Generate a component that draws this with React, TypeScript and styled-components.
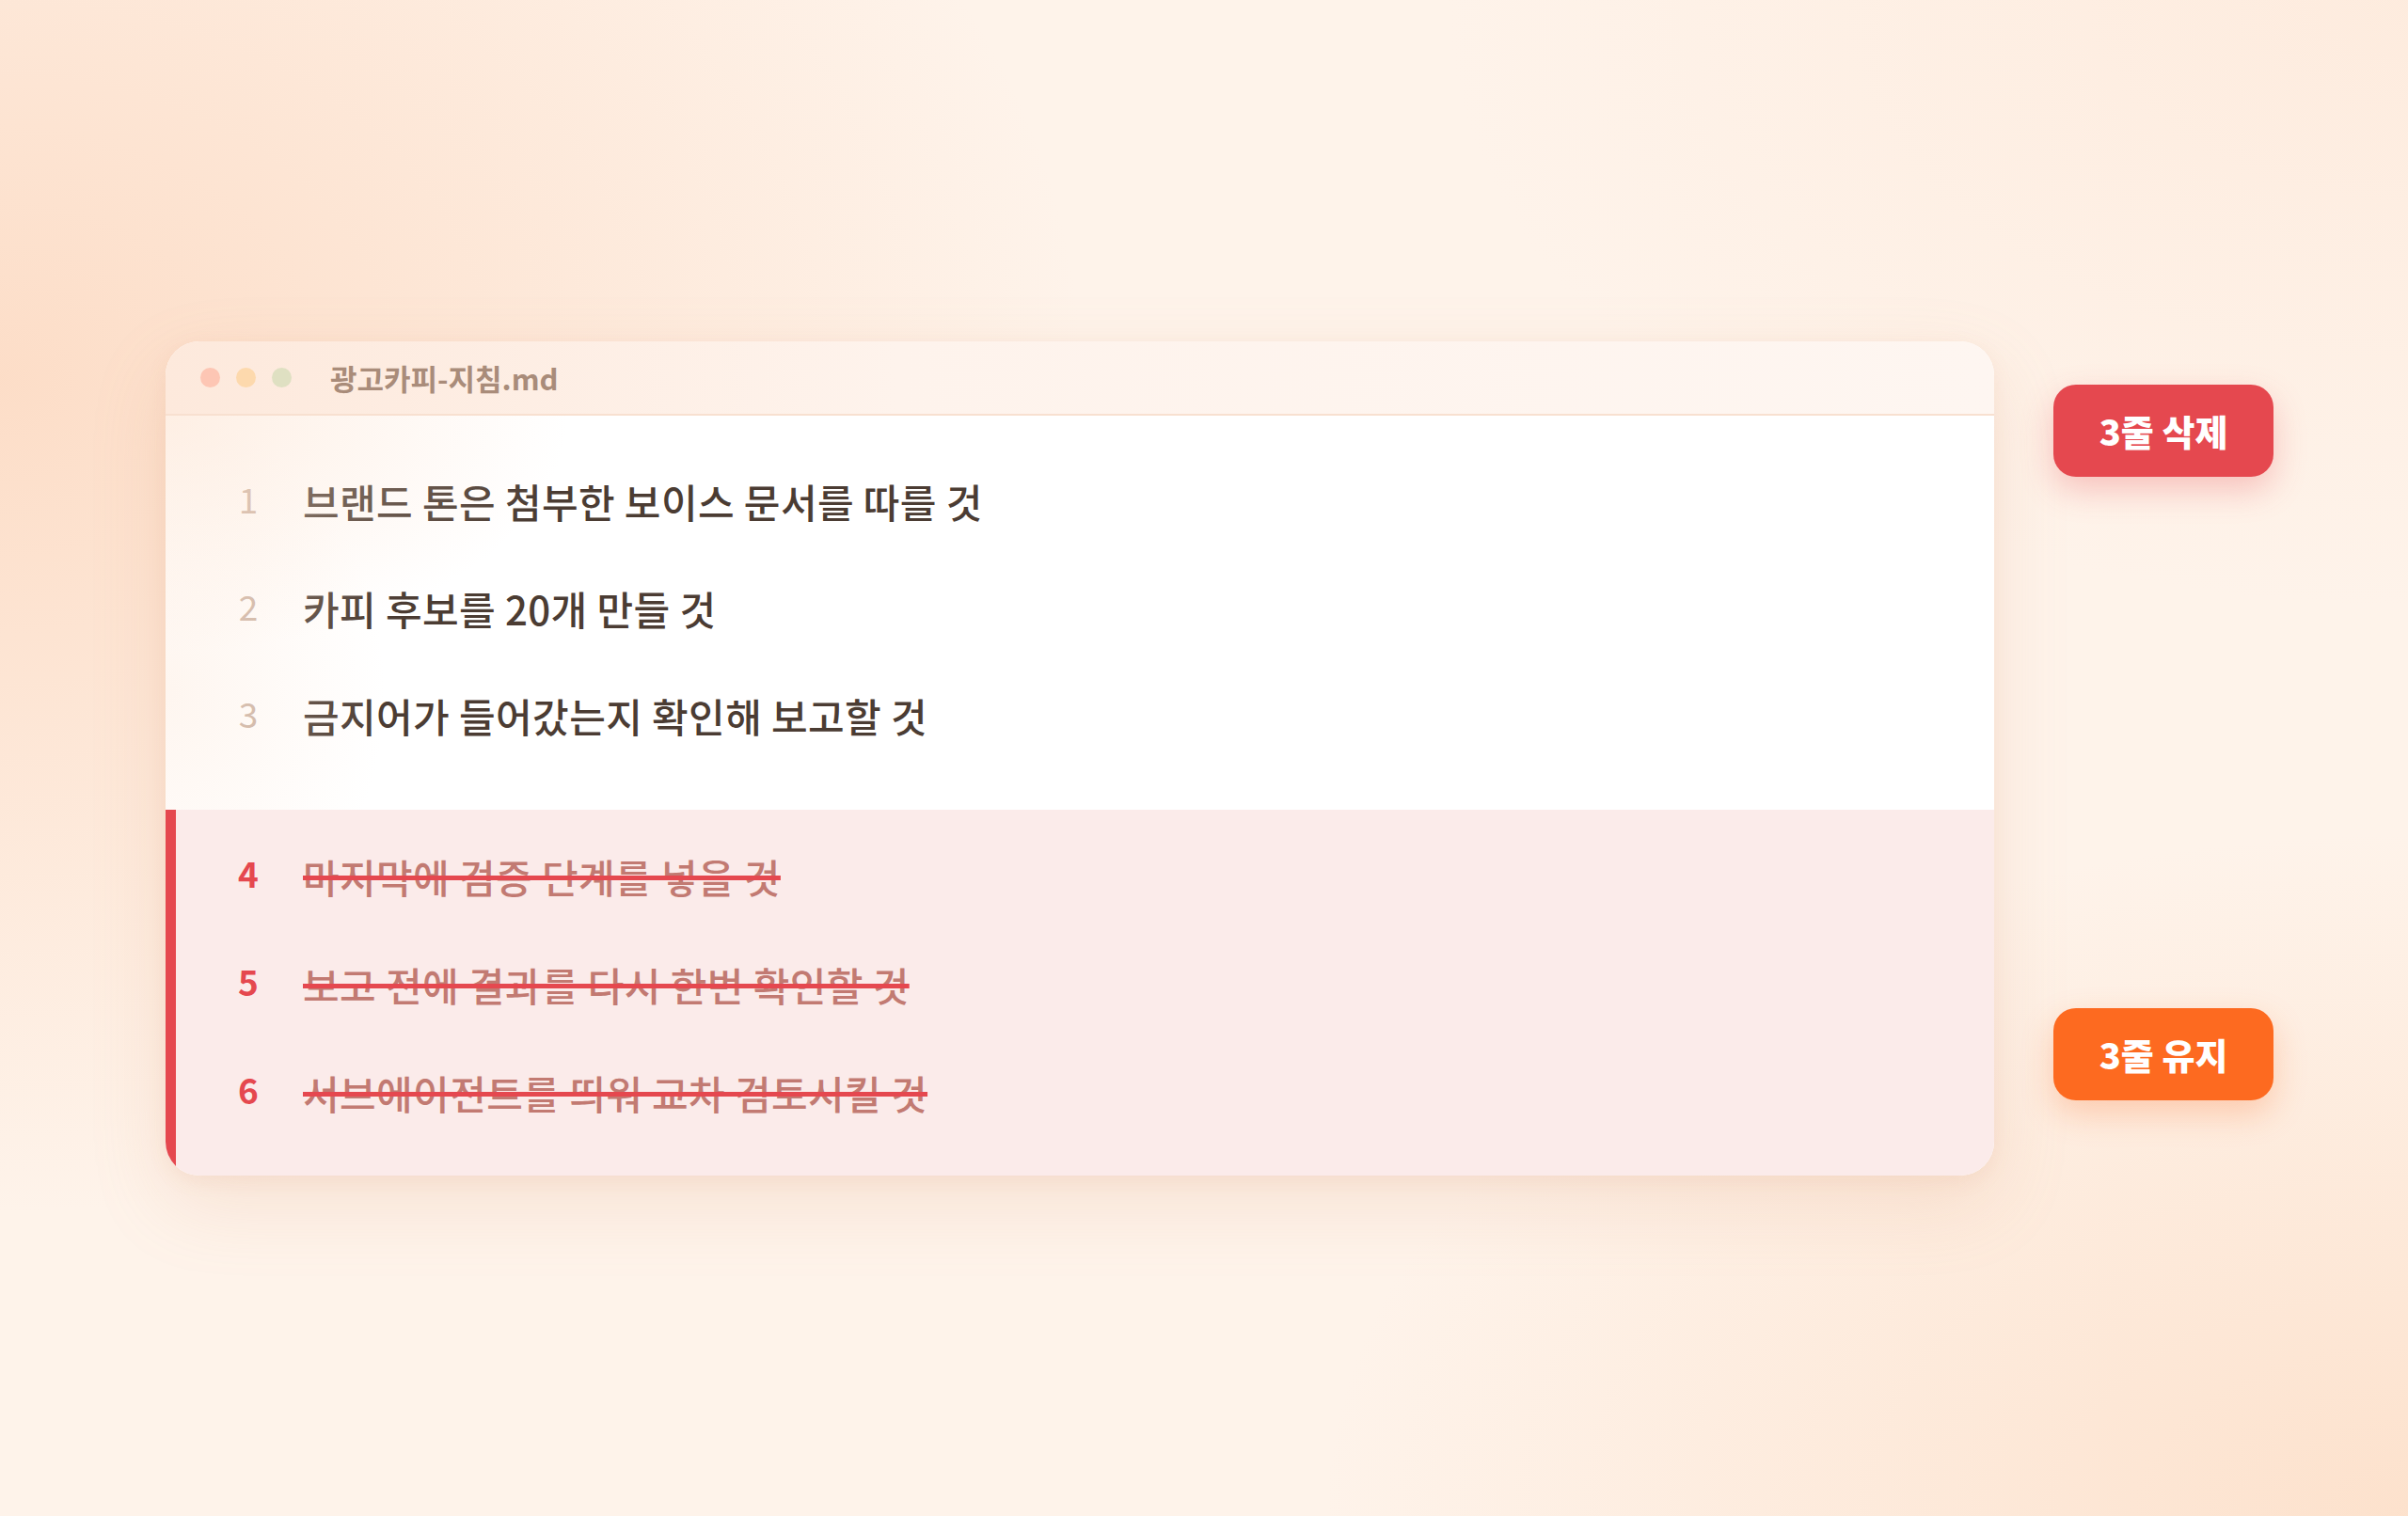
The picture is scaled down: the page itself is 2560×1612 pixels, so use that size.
import styled, { createGlobalStyle } from "styled-components";

const GlobalStyle = createGlobalStyle`
  html, body, #root {
    margin: 0;
    padding: 0;
    height: 100%;
  }
  body {
    font-family: "Noto Sans CJK KR", "Noto Sans", sans-serif;
    -webkit-font-smoothing: antialiased;
  }
`;

type Line = { no: number; text: string };

const kept: Line[] = [
  { no: 1, text: "브랜드 톤은 첨부한 보이스 문서를 따를 것" },
  { no: 2, text: "카피 후보를 20개 만들 것" },
  { no: 3, text: "금지어가 들어갔는지 확인해 보고할 것" },
];

const removed: Line[] = [
  { no: 4, text: "마지막에 검증 단계를 넣을 것" },
  { no: 5, text: "보고 전에 결과를 다시 한번 확인할 것" },
  { no: 6, text: "서브에이전트를 띄워 교차 검토시킬 것" },
];

const App = (): JSX.Element => {
  return (
    <>
      <GlobalStyle />
      <Page>
        <Layout>
          <Card>
            <TitleBar>
              <Dots>
                <Dot $color="#fdc6b4" />
                <Dot $color="#fdd9ad" />
                <Dot $color="#dfe0c2" />
              </Dots>
              <FileName>광고카피-지침.md</FileName>
            </TitleBar>
            <KeptSection>
              {kept.map((line) => (
                <Row key={line.no} $removed={false}>
                  <LineNo $removed={false}>{line.no}</LineNo>
                  <LineText $removed={false}>{line.text}</LineText>
                </Row>
              ))}
              <Haze />
            </KeptSection>
            <RemovedSection>
              {removed.map((line) => (
                <Row key={line.no} $removed>
                  <LineNo $removed>{line.no}</LineNo>
                  <LineText $removed>{line.text}</LineText>
                </Row>
              ))}
            </RemovedSection>
          </Card>
          <Side>
            <Badge $color="#e5484f" $glow="rgba(229, 72, 79, 0.28)">
              3줄 삭제
            </Badge>
            <Badge $color="#fd6a20" $glow="rgba(253, 106, 32, 0.26)">
              3줄 유지
            </Badge>
          </Side>
        </Layout>
      </Page>
    </>
  );
};

const Page = styled.div`
  min-height: 100vh;
  display: flex;
  align-items: center;
  padding-left: 176px;
  box-sizing: border-box;
  background:
    radial-gradient(ellipse 45% 55% at 0% 25%, rgba(252, 214, 188, 0.75), rgba(252, 214, 188, 0) 100%),
    radial-gradient(ellipse 45% 45% at 100% 100%, rgba(252, 218, 192, 0.7), rgba(252, 218, 192, 0) 100%),
    radial-gradient(ellipse 40% 40% at 100% 0%, rgba(253, 228, 210, 0.5), rgba(253, 228, 210, 0) 100%),
    #fef3ea;
`;

const Layout = styled.div`
  display: flex;
  align-items: flex-start;
  gap: 63px;
`;

const Card = styled.div`
  width: 1944px;
  border-radius: 36px;
  overflow: hidden;
  background: #ffffff;
  box-shadow:
    0 30px 80px rgba(214, 150, 110, 0.18),
    0 6px 20px rgba(214, 150, 110, 0.1);
`;

const TitleBar = styled.div`
  height: 77px;
  display: flex;
  align-items: center;
  padding-left: 37px;
  gap: 41px;
  background: linear-gradient(90deg, #fde9dc 0%, #fef3ec 40%, #fef6f1 100%);
  border-bottom: 2px solid #f8e0d0;
`;

const Dots = styled.div`
  display: flex;
  gap: 17px;
`;

const Dot = styled.span<{ $color: string }>`
  width: 21px;
  height: 21px;
  border-radius: 50%;
  background: ${(p) => p.$color};
`;

const FileName = styled.span`
  font-size: 31px;
  font-weight: 600;
  color: #a98c7a;
`;

const KeptSection = styled.div`
  position: relative;
  display: flex;
  flex-direction: column;
  padding: 34px 0 43px 68px;
  background: #ffffff;
`;

const RemovedSection = styled.div`
  display: flex;
  flex-direction: column;
  padding: 13px 0 31px 57px;
  background: #fbebea;
  border-left: 11px solid #e5484f;
`;

const Row = styled.div<{ $removed: boolean }>`
  height: ${(p) => (p.$removed ? "115px" : "114px")};
  display: flex;
  align-items: center;
  gap: 38px;
`;

const LineNo = styled.span<{ $removed: boolean }>`
  width: 40px;
  text-align: center;
  font-size: 37px;
  font-weight: ${(p) => (p.$removed ? 700 : 400)};
  color: ${(p) => (p.$removed ? "#e5484f" : "#c9b0a0")};
  transform: translateY(-3px);
`;

const LineText = styled.span<{ $removed: boolean }>`
  font-size: 42px;
  font-weight: 500;
  letter-spacing: 0.4px;
  color: ${(p) => (p.$removed ? "#c27a72" : "#4b3c33")};
  text-decoration: ${(p) => (p.$removed ? "line-through" : "none")};
  text-decoration-color: #e5484f;
  text-decoration-thickness: 5px;
`;

const Haze = styled.div`
  position: absolute;
  inset: 0;
  pointer-events: none;
  background:
    radial-gradient(ellipse 22% 60% at 0% 0%, rgba(253, 226, 206, 0.55), rgba(253, 226, 206, 0) 100%),
    radial-gradient(ellipse 12% 70% at 0% 70%, rgba(253, 232, 216, 0.4), rgba(253, 232, 216, 0) 100%);
`;

const Side = styled.div`
  display: flex;
  flex-direction: column;
  gap: 565px;
  padding-top: 46px;
`;

const Badge = styled.div<{ $color: string; $glow: string }>`
  width: 234px;
  height: 98px;
  border-radius: 24px;
  display: flex;
  align-items: center;
  justify-content: center;
  background: ${(p) => p.$color};
  color: #ffffff;
  font-size: 38px;
  font-weight: 800;
  box-shadow: 0 14px 34px ${(p) => p.$glow};
`;

export default App;
